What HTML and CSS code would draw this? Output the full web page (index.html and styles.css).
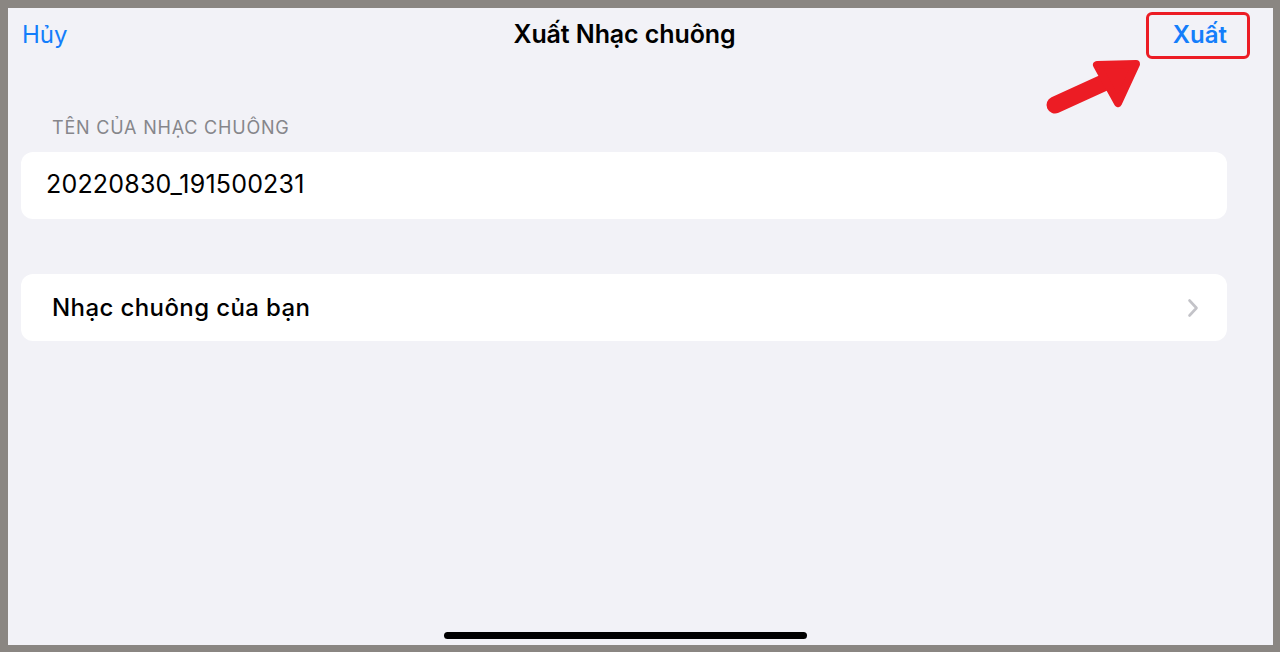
FILE: index.html
```html
<!DOCTYPE html>
<html lang="vi">
<head>
<meta charset="utf-8">
<title>Xuất Nhạc chuông</title>
<link rel="stylesheet" href="styles.css">
</head>
<body>
<div class="frame">
  <div class="screen">
    <header class="nav">
      <span class="nav-btn nav-cancel">Hủy</span>
      <span class="nav-title">Xuất Nhạc chuông</span>
      <span class="nav-btn nav-done">Xuất</span>
    </header>

    <main class="content">
      <div class="section-label">TÊN CỦA NHẠC CHUÔNG</div>
      <div class="card field">20220830_191500231</div>

      <div class="card row">
        <span class="row-title">Nhạc chuông của bạn</span>
        <svg class="chevron" width="12" height="20" viewBox="0 0 12 20">
          <path d="M2.5 2.5 L9.5 10 L2.5 17.5" fill="none" stroke="#c3c3c8" stroke-width="2.6" stroke-linecap="round" stroke-linejoin="round"/>
        </svg>
      </div>
    </main>

    <div class="home-bar"><span class="home-indicator"></span></div>

    <!-- callout around the export button -->
    <div class="callout-box"></div>
    <svg class="callout-arrow" width="110" height="70" viewBox="0 0 110 70">
      <path d="M15 55 L72 29" stroke="#ec1c24" stroke-width="17" stroke-linecap="round" fill="none"/>
      <polygon points="57,15 96,14 78,53" fill="#ec1c24" stroke="#ec1c24" stroke-width="8" stroke-linejoin="round"/>
    </svg>
  </div>
</div>
</body>
</html>
```

FILE: styles.css
```css
* { box-sizing: border-box; }

html, body {
  margin: 0;
  padding: 0;
  width: 1280px;
  height: 652px;
  overflow: hidden;
}

body {
  font-family: "Inter", "Noto Sans", "Liberation Sans", sans-serif;
  background: #8a8682;
}

.frame {
  width: 1280px;
  height: 652px;
  padding: 8px 7px 7px 8px;
}

.screen {
  position: relative;
  width: 100%;
  height: 100%;
  background: #f2f2f7;
  display: flex;
  flex-direction: column;
}

.nav {
  height: 52px;
  display: grid;
  grid-template-columns: 1fr auto 1fr;
  align-items: center;
  padding: 0 46px 0 14px;
}

.nav-btn {
  font-size: 24px;
  color: #147efb;
}

.nav-cancel { justify-self: start; }

.nav-done {
  justify-self: end;
  font-weight: 600;
}

.nav-title {
  font-size: 25px;
  font-weight: 600;
  color: #000;
  letter-spacing: -0.1px;
}

.content {
  padding: 58px 46px 0 13px;
  display: flex;
  flex-direction: column;
}

.section-label {
  font-size: 18px;
  color: #86868b;
  padding-left: 31px;
  height: 20px;
  line-height: 20px;
  margin-bottom: 14px;
  letter-spacing: 0.8px;
}

.card {
  background: #fff;
  border-radius: 12px;
  height: 67px;
  display: flex;
  align-items: center;
}

.field {
  font-size: 25px;
  color: #000;
  padding-left: 25px;
  padding-bottom: 4px;
  letter-spacing: 0.2px;
}

.row {
  margin-top: 55px;
  padding: 0 28px 0 31px;
  justify-content: space-between;
}

.row-title {
  font-size: 24px;
  font-weight: 500;
  color: #000;
  letter-spacing: 0.4px;
}

.chevron { display: block; }

.home-bar {
  margin-top: auto;
  height: 13px;
  display: flex;
  justify-content: center;
  align-items: flex-start;
}

.home-indicator {
  display: block;
  width: 363px;
  height: 7px;
  border-radius: 4px;
  background: #000;
  margin-right: 31px;
}

.callout-box {
  position: absolute;
  left: 1138px;
  top: 4px;
  width: 104px;
  height: 47px;
  border: 3.5px solid #ec1c24;
  border-radius: 6px;
}

.callout-arrow {
  position: absolute;
  left: 1032px;
  top: 42px;
}
```
